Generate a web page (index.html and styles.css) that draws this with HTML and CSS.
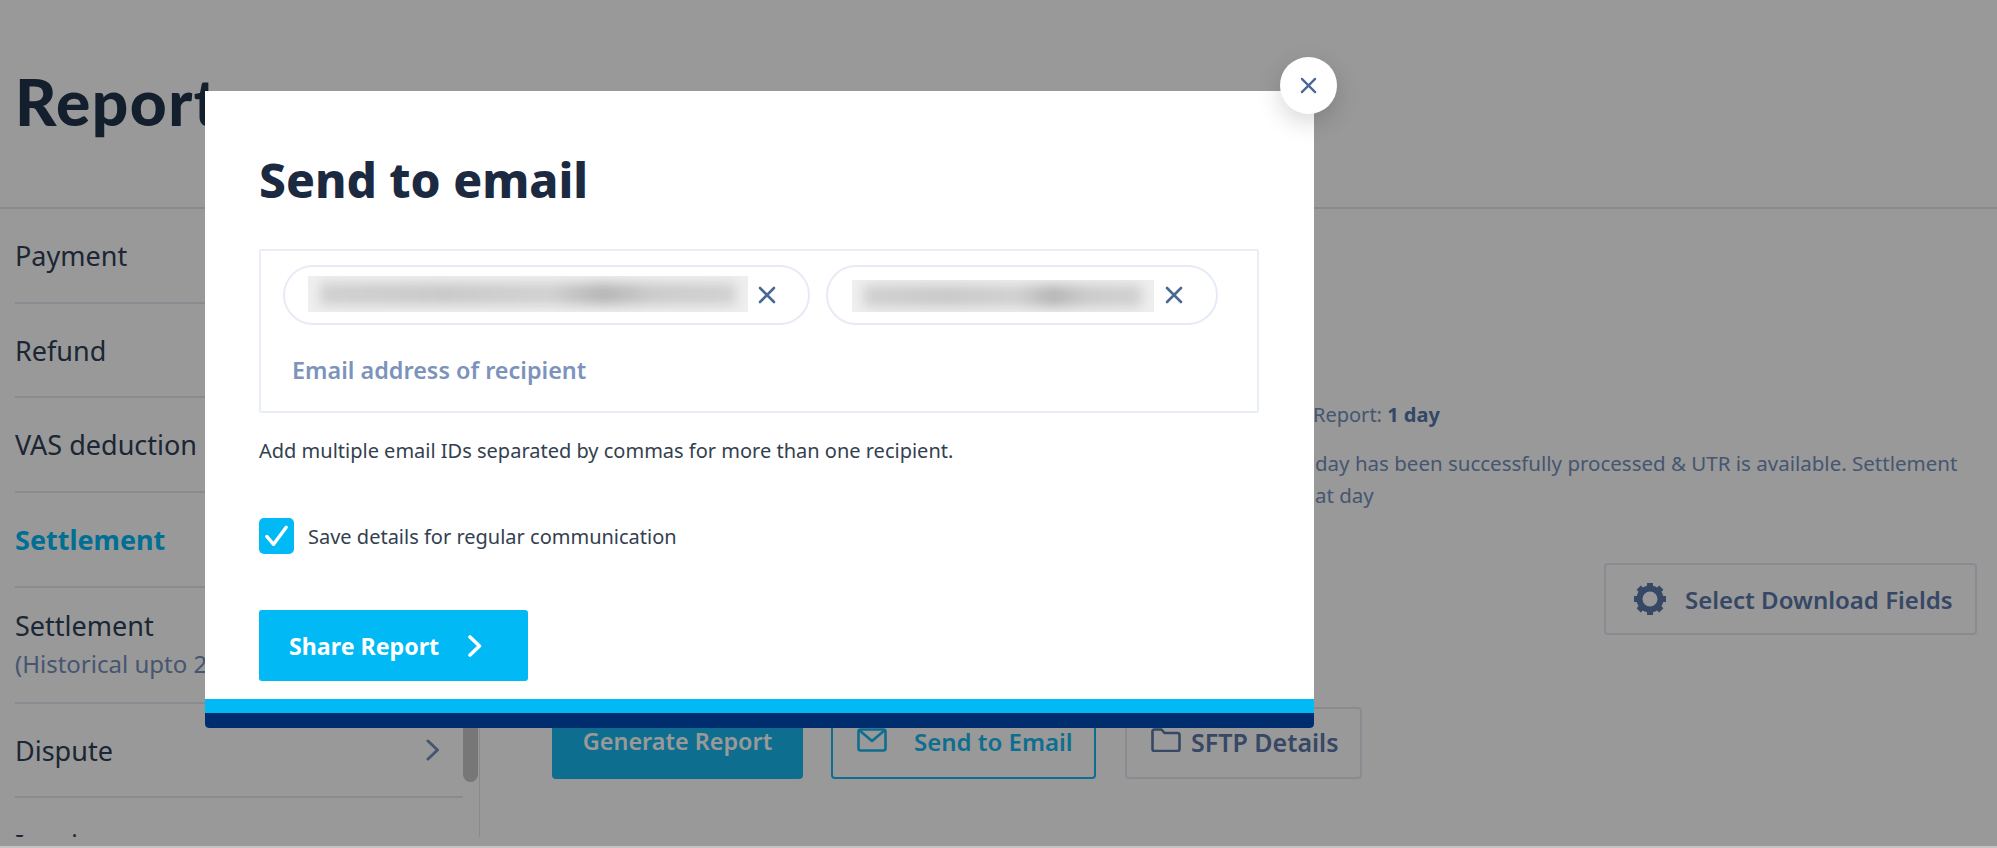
FILE: index.html
```html
<!DOCTYPE html>
<html lang="en">
<head>
<meta charset="utf-8">
<title>Reports</title>
<link rel="stylesheet" href="styles.css">
</head>
<body>
<div class="page">
  <header class="page-head"><h1 class="page-title">Reports</h1></header>
  <div class="content">
    <nav class="sidebar">
      <div class="nav-item">Payment</div>
      <div class="nav-item">Refund</div>
      <div class="nav-item">VAS deduction</div>
      <div class="nav-item nav-active">Settlement</div>
      <div class="nav-item nav-tall">Settlement<span class="nav-sub">(Historical upto 2</span></div>
      <div class="nav-item nav-more">Dispute
        <svg class="nav-chevron" viewBox="0 0 14 22"><path d="M3 2l9.5 9L3 20"/></svg>
      </div>
      <div class="nav-item">Invoices</div>
      <div class="scrollbar"></div>
    </nav>
    <main class="main">
      <div class="info">
        <p class="info-head">Report: <b>1 day</b></p>
        <p class="info-line">day has been successfully processed &amp; UTR is available. Settlement</p>
        <p class="info-line">at day</p>
      </div>
      <div class="field-row">
        <button class="btn btn-fields">
          <svg class="gear" viewBox="0 0 36 36"><circle cx="18" cy="18" r="10.5"/><path d="M18 2v6M18 28v6M2 18h6M28 18h6M6.7 6.7l4.2 4.2M25.1 25.1l4.2 4.2M6.7 29.3l4.2-4.2M25.1 10.9l4.2-4.2"/></svg>
          Select Download Fields
        </button>
      </div>
      <div class="actions">
        <button class="btn btn-primary">Generate Report</button>
        <button class="btn btn-outline">
          <svg class="btn-icon" viewBox="0 0 30 24"><rect x="1.5" y="1.5" width="27" height="21" rx="2"/><path d="M2 2l13 11L28 2"/></svg>
          Send to Email
        </button>
        <button class="btn btn-plain">
          <svg class="btn-icon" viewBox="0 0 30 24"><path d="M1.5 4a2 2 0 0 1 2-2.500h7l3 3.500h13a2 2 0 0 1 2 2v14a2 2 0 0 1-2 2h-23a2 2 0 0 1-2-2z"/></svg>
          SFTP Details
        </button>
      </div>
    </main>
  </div>
</div>
<div class="overlay"></div>
<section class="modal">
  <div class="modal-body">
    <h2 class="modal-title">Send to email</h2>
    <div class="email-box">
      <div class="chips">
        <div class="chip chip-long">
          <div class="redact redact-long"><i></i></div>
          <svg class="chip-x" viewBox="0 0 18 18"><path d="M2 2l14 14M16 2L2 16"/></svg>
        </div>
        <div class="chip chip-short">
          <div class="redact redact-short"><i></i></div>
          <svg class="chip-x" viewBox="0 0 18 18"><path d="M2 2l14 14M16 2L2 16"/></svg>
        </div>
      </div>
      <div class="placeholder">Email address of recipient</div>
    </div>
    <p class="hint">Add multiple email IDs separated by commas for more than one recipient.</p>
    <label class="check-row">
      <span class="checkbox"><svg viewBox="0 0 36 36"><path d="M8 18.500l7 8L28 9"/></svg></span>
      Save details for regular communication
    </label>
    <button class="share">Share Report
      <svg class="share-chevron" viewBox="0 0 14 22"><path d="M2 2l9.500 9L2 20"/></svg>
    </button>
  </div>
  <div class="stripe-light"></div>
  <div class="stripe-dark"></div>
  <button class="close" aria-label="Close"><svg viewBox="0 0 18 18"><path d="M2 2l14 14M16 2L2 16"/></svg></button>
</section>
</body>
</html>
```
FILE: styles.css
```css
* { box-sizing: border-box; }
html, body { margin: 0; height: 848px; overflow: hidden; background: #c4c4c4; }
body { font-family: "Noto Sans", "Open Sans", sans-serif; color: #243650; }
p, h1, h2 { margin: 0; }
button { font: inherit; cursor: pointer; }

.page { height: 846px; display: flex; flex-direction: column; background: #fff; }
.page-head { height: 209px; border-bottom: 2px solid #dfe5ee; padding: 62px 0 0 15px; }
.page-title { font-family: "Lato", "Noto Sans", sans-serif; font-size: 64px; line-height: 80px; font-weight: 900; letter-spacing: 1.500px; color: #22344d; }
.content { display: flex; height: 628px; }

.sidebar { position: relative; width: 480px; flex: none; height: 628px; overflow: hidden; padding-left: 15px; padding-right: 16px; border-right: 1px solid #dfe5ee; }
.nav-item { height: 94.700px; display: flex; align-items: center; justify-content: space-between; border-bottom: 2px solid #e3e8f0; font-size: 27px; color: #2f4058; }
.nav-active { color: #00b9f5; font-weight: 700; }
.nav-tall { height: 116px; flex-direction: column; align-items: flex-start; justify-content: center; }
.nav-sub { color: #7390bb; font-size: 24px; margin-top: 2px; line-height: 36px; }
.nav-chevron { width: 14px; height: 22px; margin-right: 24px; fill: none; stroke: #7390bb; stroke-width: 3; stroke-linecap: round; stroke-linejoin: round; }
.scrollbar { position: absolute; right: 1px; top: 0; width: 15px; height: 573px; border-radius: 8px; background: #c6c6c6; }

.main { flex: 1; min-width: 0; padding-left: 72px; }
.info { padding: 192px 0 0 761px; font-size: 20px; color: #7390bb; }
.info p { white-space: nowrap; }
.info b { color: #5577aa; }
.info-head { line-height: 28px; margin-bottom: 18px; }
.info-line { line-height: 32px; margin-left: 2px; font-size: 20.500px; }
.field-row { display: flex; justify-content: flex-end; padding-right: 20px; margin-top: 52px; }
.btn { display: flex; align-items: center; border-radius: 4px; font-size: 24px; font-weight: 600; background: transparent; }
.btn-fields { width: 373px; height: 72px; padding: 0 0 0 26px; gap: 17px; border: 2px solid #e3e8f0; color: #5a78a8; }
.gear { width: 36px; height: 36px; fill: none; stroke: #5a78a8; stroke-width: 6; }
.actions { display: flex; gap: 28px; margin-top: 72px; }
.btn-primary { width: 251px; height: 72px; justify-content: center; border: 0; background: #17b7ee; color: #fff; font-size: 23.400px; }
.btn-outline { width: 265px; height: 72px; padding: 0 0 0 24px; gap: 27px; border: 2px solid #17b7ee; color: #17b7ee; }
.btn-plain { width: 237px; height: 72px; margin-left: 1px; padding: 0 0 0 24px; gap: 10px; border: 2px solid #e3e8f0; color: #5a78a8; font-size: 25px; }
.btn-icon { width: 30px; height: 24px; fill: none; stroke: currentColor; stroke-width: 2.600; stroke-linejoin: round; align-self: flex-start; margin-top: 19px; }
.btn-outline, .btn-plain, .btn-primary { align-items: flex-start; line-height: 66px; }

.overlay { position: fixed; left: 0; top: 0; width: 100%; height: 846px; background: rgba(0, 0, 0, .4); }

.modal { position: absolute; left: 205px; top: 91px; width: 1109px; height: 637px; background: #fff; border-radius: 0 0 4px 4px; display: flex; flex-direction: column; }
.modal-body { flex: 1; padding: 58px 54px 0; }
.modal-title { font-size: 47.800px; line-height: 62px; font-weight: 800; color: #1b2a40; }
.email-box { margin-top: 38px; height: 164px; width: 1000px; border: 2px solid #e9eef6; border-radius: 2px; padding: 14px 22px 0; }
.chips { display: flex; gap: 16px; }
.chip { height: 60px; border: 2px solid #e6ebf5; border-radius: 30px; display: flex; align-items: center; background: #fff; padding-left: 23px; }
.chip-long { width: 527px; }
.chip-short { width: 392px; padding-left: 24px; }
.redact { overflow: hidden; background: #efefef; position: relative; flex: none; }
.redact i { position: absolute; left: 12px; right: 12px; top: 50%; height: 22px; margin-top: -11px; background: linear-gradient(90deg, #cfcfcf, #c8c8c8 30%, #d0d0d0 55%, #b4b4b4 68%, #cacaca 80%, #d0d0d0); filter: blur(6px); }
.redact-long { width: 440px; height: 36px; margin-top: -2px; }
.redact-short { width: 302px; height: 32px; margin-top: 2px; }
.chip-x { width: 18px; height: 18px; margin-left: 10px; fill: none; stroke: #4a6894; stroke-width: 2.600; stroke-linecap: round; }
.chip-short .chip-x { margin-left: 11px; }
.placeholder { margin: 25px 0 0 9px; font-size: 23.400px; line-height: 40px; font-weight: 600; color: #7c93bb; }
.hint { margin-top: 24px; font-size: 20px; line-height: 28px; color: #33404f; }
.check-row { display: flex; align-items: center; gap: 14px; margin-top: 53px; font-size: 20px; color: #33404f; }
.checkbox { width: 35px; height: 36px; border-radius: 5px; background: #00b9f5; display: block; }
.checkbox svg { display: block; width: 35px; height: 36px; fill: none; stroke: #fff; stroke-width: 3.500; stroke-linecap: round; stroke-linejoin: round; }
.share { margin-top: 56px; width: 269px; height: 71px; border: 0; border-radius: 3px; background: #00b9f5; color: #fff; font-size: 23.200px; font-weight: 700; display: flex; align-items: center; padding: 0 0 0 30px; gap: 29px; }
.share-chevron { width: 14px; height: 22px; fill: none; stroke: #fff; stroke-width: 3.600; stroke-linecap: round; stroke-linejoin: round; }
.stripe-light { height: 14px; background: #00b9f5; }
.stripe-dark { height: 15px; background: #002d6e; border-radius: 0 0 4px 4px; }
.close { position: absolute; right: -23px; top: -34px; width: 57px; height: 57px; border: 0; border-radius: 50%; background: #fff; padding: 20px; box-shadow: 0 8px 24px rgba(0, 0, 0, .16); }
.close svg { display: block; width: 17px; height: 17px; fill: none; stroke: #4a6894; stroke-width: 2.400; stroke-linecap: round; }
```
